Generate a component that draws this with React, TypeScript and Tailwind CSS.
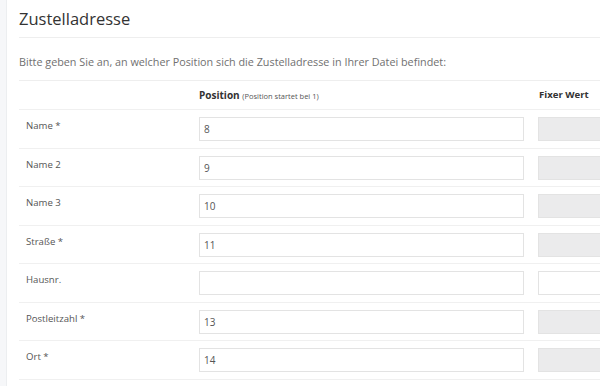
const rows = [
  { label: 'Name *', value: '8', fixed: true },
  { label: 'Name 2', value: '9', fixed: true },
  { label: 'Name 3', value: '10', fixed: true },
  { label: 'Straße *', value: '11', fixed: true },
  { label: 'Hausnr.', value: '', fixed: false },
  { label: 'Postleitzahl *', value: '13', fixed: true },
  { label: 'Ort *', value: '14', fixed: true },
];

export default function App() {
  return (
    <div className="flex h-[386px] w-[600px] overflow-hidden bg-white font-['Open_Sans',sans-serif]">
      <div className="w-[7px] shrink-0 border-r border-[#eceef0] bg-[#f6f7f9]" />
      <div className="min-w-0 flex-1 pl-[12px]">
        <h1 className="h-[38px] border-b border-[#eeeeee] pt-[7px] text-[16.5px] leading-[24px] text-[#333333]">
          Zustelladresse
        </h1>
        <p className="h-[43px] border-b border-[#eeeeee] pt-[15px] text-[10.8px] leading-[18px] text-[#707070]">
          Bitte geben Sie an, an welcher Position sich die Zustelladresse in Ihrer Datei befindet:
        </p>
        <div className="flex h-[29px] items-center border-b border-[#f0f0f0] text-[#333333]">
          <div className="w-[180px] shrink-0" />
          <div className="w-[340px] shrink-0 text-[10px] font-bold">
            Position <span className="text-[7.5px] font-normal text-[#555555]">(Position startet bei 1)</span>
          </div>
          <div className="shrink-0 text-[9.6px] font-bold">Fixer Wert</div>
        </div>
        {rows.map((r) => (
          <div key={r.label} className="flex h-[38.5px] items-start border-b border-[#f0f0f0]">
            <div className="w-[180px] shrink-0 pl-[7px] pt-[9px] text-[9.6px] leading-[14px] text-[#555555]">
              {r.label}
            </div>
            <input
              readOnly
              value={r.value}
              className="mt-[7px] h-[24px] w-[325px] shrink-0 border border-[#e3e3e3] bg-white px-[4px] text-[10px] text-[#555555] outline-none"
            />
            <div
              className={`mt-[7px] ml-[14px] h-[24px] w-[80px] shrink-0 border border-[#e3e3e3] ${
                r.fixed ? 'bg-[#ebebec]' : 'bg-white'
              }`}
            />
          </div>
        ))}
      </div>
    </div>
  );
}
